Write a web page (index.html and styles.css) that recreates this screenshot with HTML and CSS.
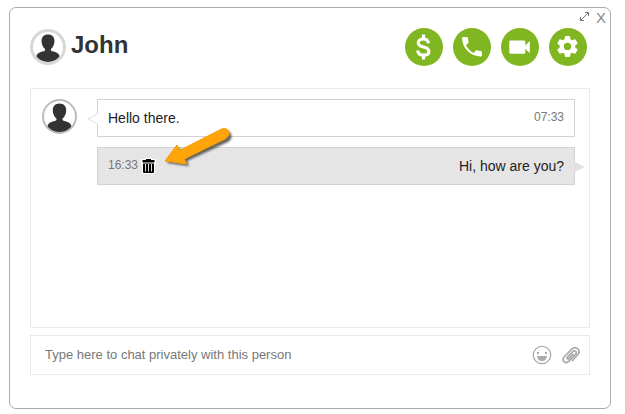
FILE: index.html
```html
<!DOCTYPE html>
<html lang="en">
<head>
<meta charset="utf-8">
<title>Private chat</title>
<link rel="stylesheet" href="styles.css">
</head>
<body>
<svg class="sprite">
  <symbol id="person" viewBox="3 3 30 30">
    <path fill="#333" d="M18 5.500c-4.200 0-6.500 2.700-6.500 6.500 0 3.200 1.400 6.200 3.500 8 .3 1.400-.3 2-1.500 2.300-3.700.8-6.700 2-7.300 5.700C9 31.500 13.200 33.500 18 33.500s9-2 11.800-5.500c-.6-3.700-3.600-4.900-7.300-5.700-1.200-.3-1.800-.9-1.500-2.300 2.100-1.800 3.500-4.800 3.500-8 0-3.800-2.300-6.500-6.500-6.500z"/>
  </symbol>
</svg>
<main class="panel">
  <div class="window-controls">
    <button class="window-button" aria-label="Expand">
      <svg width="11" height="13" viewBox="0 0 11 13" fill="none" stroke="#777"><path d="M1.500 10.500l8-8M6 2.500h3.500V6M1.500 7v3.500H5"/></svg>
    </button>
    <button class="window-button" aria-label="Close">X</button>
  </div>
  <header class="header">
    <svg class="avatar avatar-large"><use href="#person"/></svg>
    <h1 class="name">John</h1>
    <div class="actions">
      <button class="action" aria-label="Send money">
        <svg viewBox="0 0 38 38" fill="none" stroke="#fff" stroke-width="3.200"><path d="M23.500 15.300c-.4-2.900-2.400-4.300-5-4.300-3 0-5.200 1.500-5.200 3.900 0 5.400 10.600 2.800 10.600 8.300 0 2.600-2.200 4-5.300 4-3.500 0-5.700-1.600-5.800-4.700M18.500 6.500V11M18.500 27v4.500"/></svg>
      </button>
      <button class="action" aria-label="Call">
        <svg viewBox="0 0 38 38" fill="#fff"><path d="M10.200 9h3.600c.6 0 1 .4 1.100 1 .1 1.400.3 2.700.7 3.900.1.400 0 .8-.3 1.100l-2.400 2.300c1.700 3.300 4.300 5.900 7.600 7.600l2.400-2.400c.3-.3.700-.4 1.100-.3 1.200.4 2.500.6 3.900.7.600.1 1 .5 1 1.100v3.500c0 .6-.5 1-1.100 1C17.500 28.500 9.100 20.100 9.100 10c0-.6.500-1 1.100-1z"/></svg>
      </button>
      <button class="action" aria-label="Video call">
        <svg viewBox="0 0 38 38" fill="#fff"><path d="M9.500 12.500h13.600q1.200 0 1.200 1.200v3.700l4.500-4.500v12.400l-4.500-4.500v3.700q0 1.200-1.200 1.200H9.500q-1.200 0-1.200-1.200V13.700q0-1.200 1.200-1.200z"/></svg>
      </button>
      <button class="action" aria-label="Settings">
        <svg viewBox="0 0 38 38"><g transform="translate(6 6) scale(1.040)"><path fill="#fff" d="M19.430 12.980c.04-.32.070-.64.070-.98s-.03-.66-.07-.98l2.110-1.650c.19-.15.240-.42.120-.64l-2-3.460c-.12-.22-.39-.3-.61-.22l-2.490 1c-.52-.4-1.080-.73-1.690-.98l-.38-2.650C14.460 2.180 14.250 2 14 2h-4c-.25 0-.46.180-.49.420l-.38 2.650c-.61.250-1.170.590-1.690.980l-2.490-1c-.23-.09-.49 0-.61.220l-2 3.460c-.13.220-.07.490.120.640l2.110 1.650c-.04.320-.07.650-.07.980s.03.660.070.980l-2.110 1.650c-.19.150-.24.420-.12.640l2 3.460c.12.220.390.300.610.220l2.490-1c.52.400 1.080.730 1.690.980l.38 2.650c.03.240.240.420.490.420h4c.25 0 .46-.18.490-.42l.38-2.650c.61-.25 1.170-.59 1.690-.98l2.490 1c.23.090.490 0 .61-.22l2-3.460c.12-.22.070-.49-.12-.64l-2.110-1.650zM12 15.500A3.500 3.500 0 1 1 12 8.500a3.500 3.500 0 0 1 0 7z"/></g></svg>
      </button>
    </div>
  </header>
  <section class="messages" aria-label="Messages">
    <div class="row">
      <svg class="avatar"><use href="#person"/></svg>
      <div class="bubble">
        <svg class="tail tail-left" width="11" height="12" viewBox="0 0 11 12"><path d="M11 .5L1 6l10 5.500" fill="#fff" stroke="#ddd"/></svg>
        <p class="text">Hello there.</p>
        <time class="time">07:33</time>
      </div>
    </div>
    <div class="row">
      <div class="bubble bubble-own">
        <svg class="tail tail-right" width="11" height="12" viewBox="0 0 11 12"><path d="M0 .5L10.500 6 0 11.500z" fill="#e0e0e0"/></svg>
        <time class="time">16:33</time>
        <button class="delete" aria-label="Delete message">
          <svg width="15" height="16" viewBox="0 0 15 16"><path d="M0 1h4V0h7v1h4v5h-1v10H1V6H0z" fill="#fff"/><path d="M5 1h5v1h3.500v2.500h-12V2H5zM2 5.500h11V14q0 1-1 1H3q-1 0-1-1z" fill="#000"/><path d="M4.500 6v7.500M7.500 6v7.500M10.500 6v7.500" stroke="#ddd"/></svg>
        </button>
        <p class="text text-own">Hi, how are you?</p>
        <svg class="pointer" width="76" height="46" viewBox="0 0 76 46">
          <path d="M7 38L19 22l2 5L64 6q5-1.500 7 3t-3 8L27 36l2 5z" fill="#222" opacity=".7" class="pointer-shadow"/>
          <path d="M5 36L17 20l2.500 5.500L61.500 4q5-1.500 7 2t-2.500 7.500L24.500 34l2 5z" fill="#ffa50a" stroke="#f59c05"/>
        </svg>
      </div>
    </div>
  </section>
  <form class="composer">
    <input class="field" type="text" aria-label="Message" placeholder="Type here to chat privately with this person">
    <button class="tool" type="button" aria-label="Emoji">
      <svg width="20" height="20" viewBox="0 0 20 20"><circle cx="10" cy="10" r="8.700" fill="none" stroke="#aaa" stroke-width="1.300"/><circle cx="6" cy="8" r="1.200" fill="#aaa"/><circle cx="14" cy="8" r="1.200" fill="#aaa"/><path d="M5 11h10q-.5 5-5 5t-5-5z" fill="#aaa"/></svg>
    </button>
    <button class="tool" type="button" aria-label="Attach file">
      <svg width="20" height="20" viewBox="0 0 20 20"><path d="M11.500 15.500l5-5.500c4-4.500-1.500-10-5.800-5.800L3.500 11.500c-3.500 3.800.8 8.200 4.500 4.700l6.500-6.700c2-2.400-.6-4.800-2.800-2.800l-5.200 5.400c-1 1.300.3 2.500 1.500 1.400l4-4.200" fill="none" stroke="#aaa" stroke-width="1.700" stroke-linecap="round"/></svg>
    </button>
  </form>
</main>
</body>
</html>
```
FILE: styles.css
```css
* {
  box-sizing: border-box;
}

body {
  margin: 0;
  padding: 7px 14px 5px 9px;
  min-height: 100vh;
  display: flex;
  background: #fff;
  font-family: "Liberation Sans", Arial, sans-serif;
  color: #222;
}

button {
  padding: 0;
  border: 0;
  background: none;
  font: inherit;
  cursor: pointer;
}

svg {
  display: block;
}

.sprite {
  display: none;
}

.panel {
  position: relative;
  flex: 1;
  display: flex;
  flex-direction: column;
  padding: 20px 20px 33px;
  border: 1px solid #aaa;
  border-radius: 7px;
}

.window-controls {
  position: absolute;
  top: 2px;
  right: 4px;
  display: flex;
  align-items: flex-start;
  gap: 6px;
}

.window-button {
  color: #888;
  font-size: 15px;
  line-height: 16px;
}

.header {
  display: flex;
  align-items: center;
  gap: 5px;
  padding-right: 3px;
}

.avatar {
  width: 35px;
  height: 35px;
  flex: none;
  border: 2px solid #bbb;
  border-radius: 50%;
}

.avatar-large {
  width: 36px;
  height: 36px;
  border: 3px solid #d8d8d8;
}

.name {
  margin: 0 0 4px;
  font-size: 24px;
  line-height: 28px;
  color: #333;
}

.actions {
  display: flex;
  gap: 10px;
  margin-left: auto;
}

.action {
  width: 38px;
  height: 38px;
  border-radius: 50%;
  background: #80b622;
}

.messages {
  flex: 1;
  display: flex;
  flex-direction: column;
  gap: 10px;
  margin-top: 22px;
  padding: 10px 14px 10px 11px;
  border: 1px solid #eaeaea;
}

.row {
  display: flex;
}

.bubble {
  position: relative;
  flex: 1;
  display: flex;
  align-items: flex-start;
  min-height: 38px;
  margin-left: 20px;
  padding: 10px;
  border: 1px solid #d2d2d2;
}

.bubble-own {
  margin-left: 55px;
  background: #e5e5e5;
}

.text {
  margin: 0;
  font-size: 14px;
  line-height: 16px;
}

.text-own {
  margin-left: auto;
}

.time {
  font-size: 12px;
  line-height: 14px;
  color: #777;
}

.text + .time {
  margin-left: auto;
}

.delete {
  margin-left: 3px;
}

.tail {
  position: absolute;
  top: 13px;
}

.tail-left {
  right: 100%;
}

.tail-right {
  left: 100%;
}

.pointer {
  position: absolute;
  left: 62px;
  top: -23px;
}

.pointer-shadow {
  filter: blur(1px);
}

.composer {
  display: flex;
  align-items: center;
  gap: 9px;
  height: 40px;
  margin-top: 7px;
  padding: 0 8px 0 14px;
  border: 1px solid #eaeaea;
}

.field {
  flex: 1;
  min-width: 0;
  padding: 0;
  border: 0;
  outline: 0;
  font: 13px/16px "Liberation Sans", Arial, sans-serif;
  color: #333;
}

.field::placeholder {
  color: #777;
}
```
